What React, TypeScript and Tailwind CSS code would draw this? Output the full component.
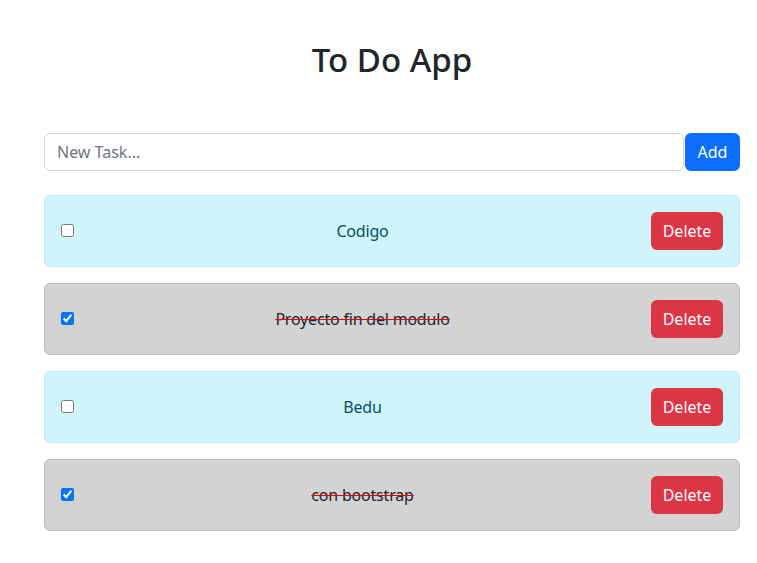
import React, { useState } from "react";

type Task = { id: number; text: string; done: boolean };

export default function App() {
  const [tasks, setTasks] = useState<Task[]>([
    { id: 1, text: "Codigo", done: false },
    { id: 2, text: "Proyecto fin del modulo", done: true },
    { id: 3, text: "Bedu", done: false },
    { id: 4, text: "con bootstrap", done: true },
  ]);
  const [value, setValue] = useState("");

  const toggle = (id: number) =>
    setTasks((t) => t.map((x) => (x.id === id ? { ...x, done: !x.done } : x)));
  const remove = (id: number) => setTasks((t) => t.filter((x) => x.id !== id));
  const add = () => {
    if (!value.trim()) return;
    setTasks((t) => [...t, { id: Date.now(), text: value, done: false }]);
    setValue("");
  };

  return (
    <div
      className="min-h-[563px] bg-white pl-[44px] pr-[17px] text-[16px] text-[#212529]"
      style={{ fontFamily: '"Noto Sans", "Open Sans", sans-serif' }}
    >
      <div className="w-[696px]">
        <h1 className="pt-[40px] text-center text-[33px] font-medium leading-[1.2] text-[#212529]">
          To Do App
        </h1>
        <div className="mt-[53px] flex">
          <input
            value={value}
            onChange={(e) => setValue(e.target.value)}
            placeholder="New Task..."
            className="h-[38px] flex-1 rounded-[6px] border border-[#ced4da] px-[12px] text-[16px] text-[#212529] outline-none placeholder:text-[#6c757d]"
          />
          <button
            onClick={add}
            className="ml-[1px] h-[38px] w-[55px] rounded-[6px] bg-[#0d6efd] text-[16px] text-white"
          >
            Add
          </button>
        </div>
        <div className="mt-[24px] flex flex-col gap-[16px]">
          {tasks.map((t) => (
            <div
              key={t.id}
              className={
                t.done
                  ? "flex h-[72px] items-center rounded-[6px] border border-[#bdbdbd] bg-[#d3d3d3] px-[16px]"
                  : "flex h-[72px] items-center rounded-[6px] border border-[#b6effb] bg-[#cff4fc] px-[16px]"
              }
            >
              <input
                type="checkbox"
                checked={t.done}
                onChange={() => toggle(t.id)}
                className="m-0 h-[13px] w-[13px]"
              />
              <span
                className={
                  t.done
                    ? "flex-1 text-center text-[#212529] tracking-[-0.2px] line-through decoration-[#e80000]"
                    : "flex-1 text-center text-[#055160] tracking-[-0.2px]"
                }
              >
                {t.text}
              </span>
              <button
                onClick={() => remove(t.id)}
                className="h-[38px] w-[72px] rounded-[6px] bg-[#dc3545] text-[16px] text-white"
              >
                Delete
              </button>
            </div>
          ))}
        </div>
      </div>
    </div>
  );
}
